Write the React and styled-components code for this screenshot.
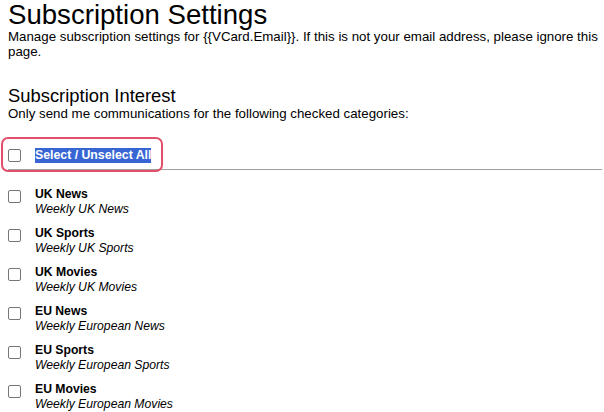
import React from 'react'
import styled, { createGlobalStyle } from 'styled-components'

const Global = createGlobalStyle`
  body {
    margin: 0;
    background: #fff;
    font-family: "Liberation Sans", Arial, sans-serif;
    color: #000;
  }
`

const Page = styled.div`
  padding: 0 2px 0 8px;
`
const Title = styled.h1`
  margin: 0;
  padding-top: 1px;
  font-size: 27.6px;
  font-weight: normal;
  line-height: 28px;
`
const Intro = styled.p`
  margin: 0;
  font-size: 13.3px;
  line-height: 15px;
`
const SubTitle = styled.h2`
  margin: 26px 0 0;
  font-size: 18.4px;
  font-weight: normal;
  line-height: 21px;
`
const SelectAll = styled.div`
  position: relative;
  margin-top: 20px;
  display: flex;
  align-items: center;
  height: 28px;
  border-bottom: 1px solid #a0a0a0;
`
const Highlight = styled.div`
  position: absolute;
  left: -7px;
  top: -4px;
  width: 158px;
  height: 31px;
  border: 2px solid #e0506a;
  border-radius: 7px;
`
const Box = styled.span`
  display: inline-block;
  flex: none;
  width: 11px;
  height: 11px;
  border: 1px solid #767676;
  border-radius: 2px;
  background: #fff;
`
const SelectLabel = styled.span`
  margin-left: 14px;
  font-size: 12.3px;
  font-weight: bold;
  color: #fff;
  background: #3766d4;
  line-height: 15px;
`
const List = styled.div`
  padding-top: 17px;
`
const Item = styled.div`
  display: flex;
  align-items: flex-start;
  height: 39px;
  ${Box} {
    margin-top: 3px;
  }
`
const ItemText = styled.div`
  margin-left: 14px;
  font-size: 12.2px;
  line-height: 15px;
`
const Name = styled.div`
  font-weight: bold;
`
const Desc = styled.div`
  font-style: italic;
`

const items = [
  ['UK News', 'Weekly UK News'],
  ['UK Sports', 'Weekly UK Sports'],
  ['UK Movies', 'Weekly UK Movies'],
  ['EU News', 'Weekly European News'],
  ['EU Sports', 'Weekly European Sports'],
  ['EU Movies', 'Weekly European Movies'],
]

export default function App() {
  return (
    <Page>
      <Global />
      <Title>Subscription Settings</Title>
      <Intro>
        Manage subscription settings for {'{{VCard.Email}}'}. If this is not your email address, please ignore this page.
      </Intro>
      <SubTitle>Subscription Interest</SubTitle>
      <Intro>Only send me communications for the following checked categories:</Intro>
      <SelectAll>
        <Highlight />
        <Box />
        <SelectLabel>Select / Unselect All</SelectLabel>
      </SelectAll>
      <List>
        {items.map(([name, desc]) => (
          <Item key={name}>
            <Box />
            <ItemText>
              <Name>{name}</Name>
              <Desc>{desc}</Desc>
            </ItemText>
          </Item>
        ))}
      </List>
    </Page>
  )
}
